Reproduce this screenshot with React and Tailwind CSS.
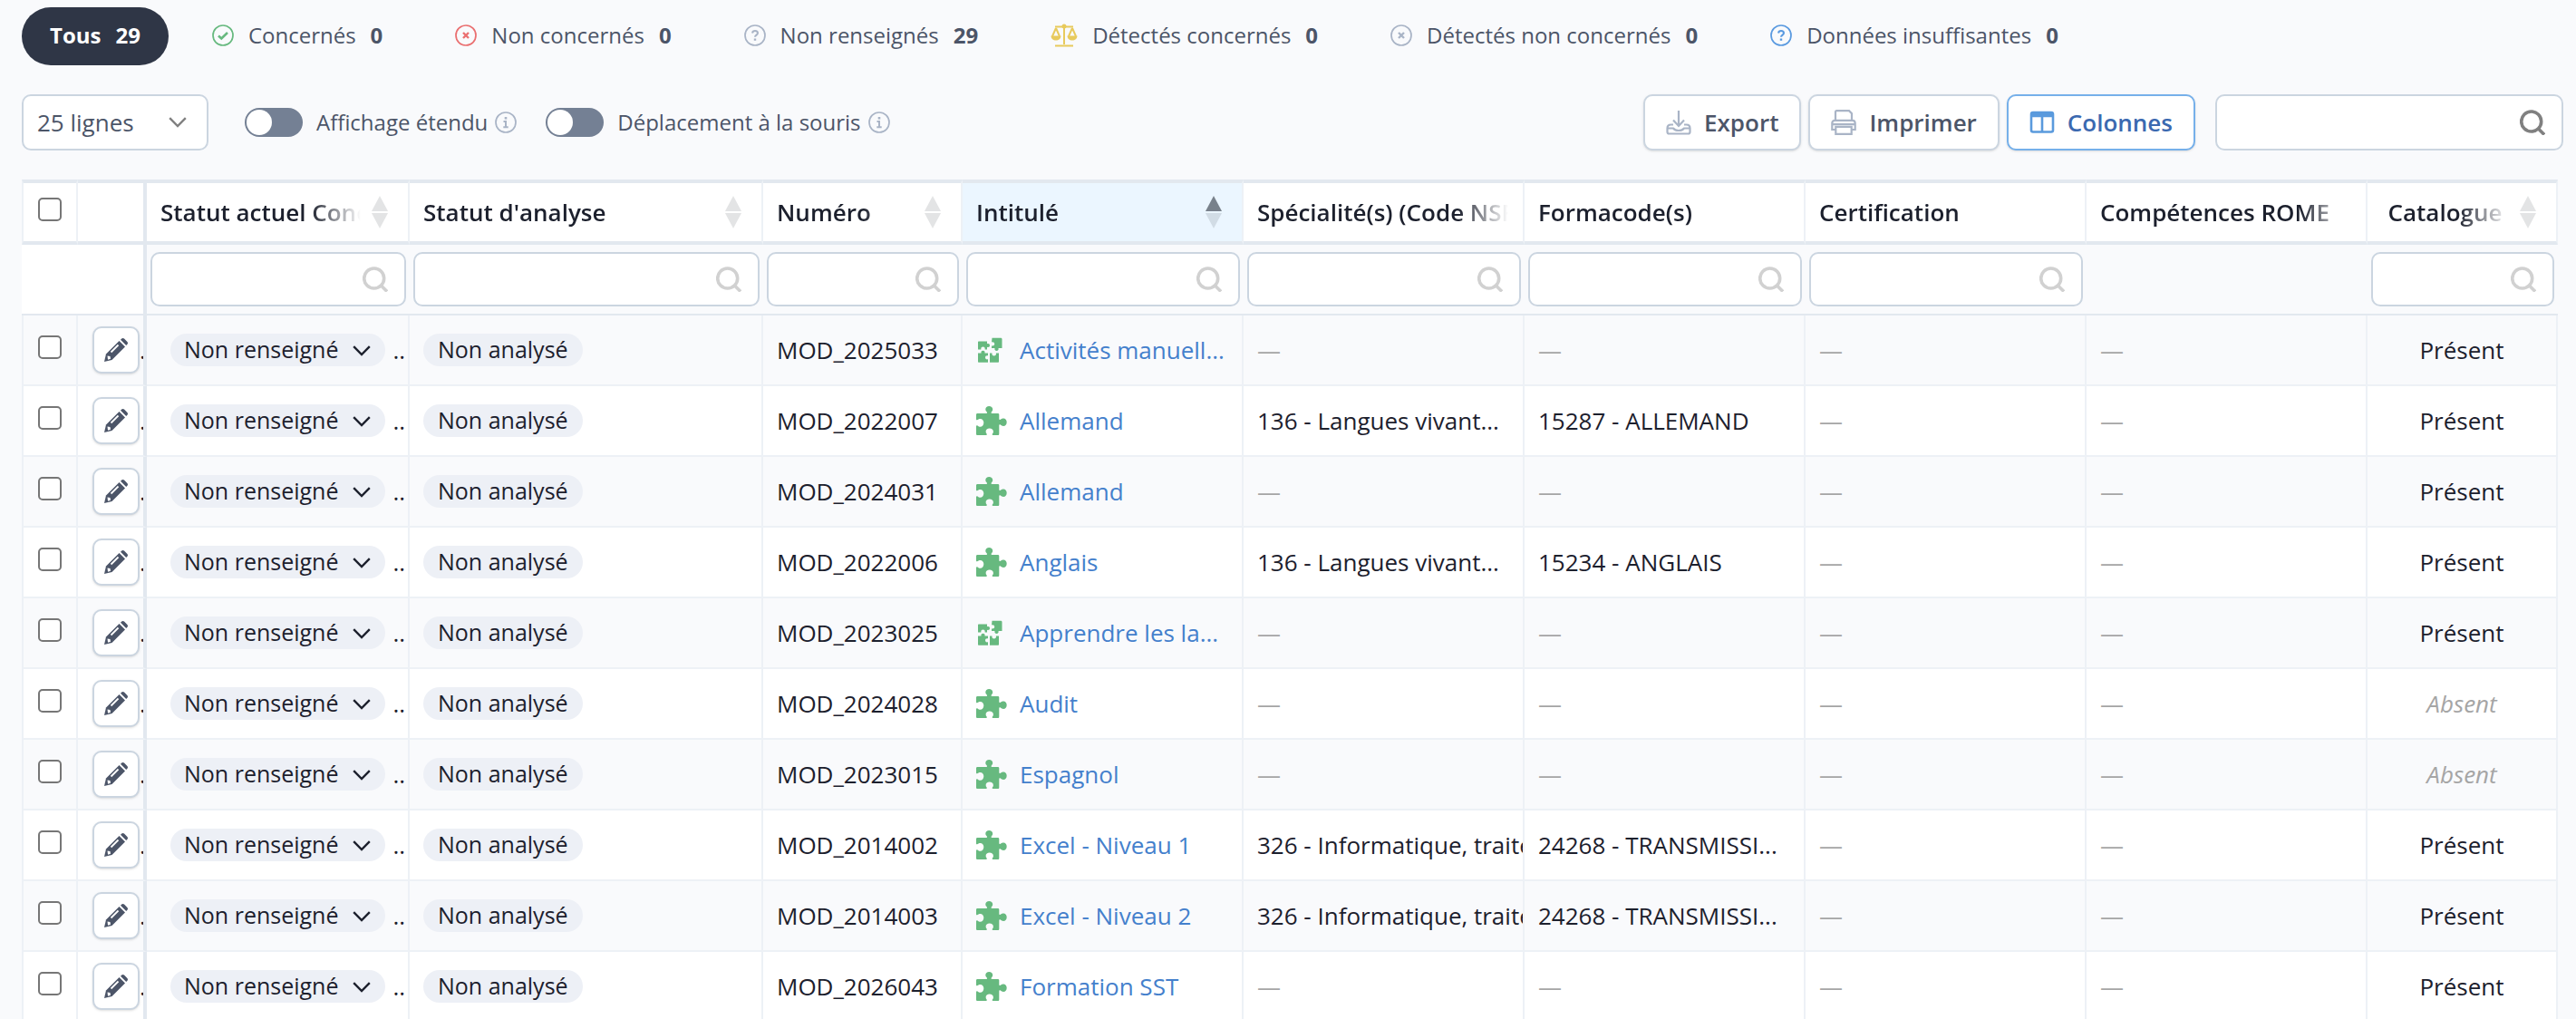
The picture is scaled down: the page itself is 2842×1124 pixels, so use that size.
import React, { useState } from 'react';

const filters = [
  { label: 'Tous', count: 29 },
  { label: 'Concernés', count: 0, icon: 'check', color: 'text-[#67b97f]' },
  { label: 'Non concernés', count: 0, icon: 'cross', color: 'text-[#ea6f70]' },
  { label: 'Non renseignés', count: 29, icon: 'question', color: 'text-[#a9b4c6]' },
  { label: 'Détectés concernés', count: 0, icon: 'scale', color: 'text-[#e8ca5c]' },
  { label: 'Détectés non concernés', count: 0, icon: 'cross', color: 'text-[#a9b4c6]' },
  { label: 'Données insuffisantes', count: 0, icon: 'question', color: 'text-[#5a9ae0]' },
];

const columns = [
  { label: 'Statut actuel Concerné', width: 290, sort: true, search: true },
  { label: "Statut d'analyse", width: 390, sort: true, search: true },
  { label: 'Numéro', width: 220, sort: true, search: true },
  { label: 'Intitulé', width: 310, sort: true, active: true, search: true },
  { label: 'Spécialité(s) (Code NSF)', width: 310, search: true },
  { label: 'Formacode(s)', width: 310, search: true },
  { label: 'Certification', width: 310, search: true },
  { label: 'Compétences ROME', width: 310 },
  { label: 'Catalogue', width: 210, sort: true, center: true, search: true },
];

const rows = [
  { num: 'MOD_2025033', title: 'Activités manuell...', split: true, present: true },
  { num: 'MOD_2022007', title: 'Allemand', nsf: '136 - Langues vivant...', forma: '15287 - ALLEMAND', present: true },
  { num: 'MOD_2024031', title: 'Allemand', present: true },
  { num: 'MOD_2022006', title: 'Anglais', nsf: '136 - Langues vivant...', forma: '15234 - ANGLAIS', present: true },
  { num: 'MOD_2023025', title: 'Apprendre les la...', split: true, present: true },
  { num: 'MOD_2024028', title: 'Audit', present: false },
  { num: 'MOD_2023015', title: 'Espagnol', present: false },
  { num: 'MOD_2014002', title: 'Excel - Niveau 1', nsf: '326 - Informatique, traite', forma: '24268 - TRANSMISSI...', present: true },
  { num: 'MOD_2014003', title: 'Excel - Niveau 2', nsf: '326 - Informatique, traite', forma: '24268 - TRANSMISSI...', present: true },
  { num: 'MOD_2026043', title: 'Formation SST', present: true },
];

const StatusIcon = ({ type }) => {
  if (type === 'scale') {
    return (
      <svg viewBox="0 0 30 26" className="h-[26px] w-[30px]" fill="none" stroke="currentColor" strokeWidth="2">
        <path d="M5 3.5h20M15 3v20M5 24.5h20" />
        <circle cx="15" cy="3" r="2.5" fill="currentColor" stroke="none" />
        <path d="M6 5 2 14M6 5l4 9M24 5l-4 9M24 5l4 9" />
        <path d="M.5 13.5h11c0 3-2.5 5-5.500 5s-5.500-2-5.500-5zM18.500 13.500h11c0 3-2.500 5-5.500 5s-5.500-2-5.500-5z" fill="currentColor" stroke="none" />
      </svg>
    );
  }
  return (
    <svg viewBox="0 0 24 24" className="size-6" fill="none" stroke="currentColor" strokeWidth="2">
      <circle cx="12" cy="12" r="11" strokeWidth="1.7" />
      {type === 'check' && <path d="m7 12.500 3.300 3L17 9" strokeWidth="2.6" />}
      {type === 'cross' && <path d="m9 9 6 6M15 9l-6 6" strokeWidth="2.4" />}
      {type === 'question' && (
        <>
          <path d="M9 9.500c.3-1.700 1.500-2.500 3-2.500 1.700 0 3 1 3 2.500 0 2-3 2.200-3 4.300" />
          <path d="M12 15.500v2.300" strokeWidth="2.4" />
        </>
      )}
      {type === 'info' && (
        <>
          <path d="M12 6v2.600" strokeWidth="2.6" />
          <path d="M9.500 11H12v6M9.300 17.200h5.400" />
        </>
      )}
    </svg>
  );
};

const Search = ({ className }) => (
  <svg viewBox="0 0 28 28" className={`pointer-events-none absolute top-1/2 right-5 size-7 -translate-y-1/2 ${className}`} fill="none" stroke="currentColor" strokeWidth="3.6">
    <circle cx="12.700" cy="13" r="11" />
    <path d="m20 20.500 7 7" />
  </svg>
);

const Chevron = ({ className }) => (
  <svg viewBox="0 0 20 12" className={className} fill="none" stroke="currentColor" strokeWidth="2.4">
    <path d="m1.200 1.200 8.800 8.800 8.800-8.800" />
  </svg>
);

const SortArrows = ({ active }) => (
  <svg viewBox="0 0 18 36" className="mr-[6px] h-9 w-[18px] shrink-0 fill-[#1a202c]">
    <path d="M9 0l9 17H0z" opacity={active ? 0.55 : 0.12} />
    <path d="M9 36l9-17H0z" opacity="0.12" />
  </svg>
);

const Pencil = () => (
  <svg viewBox="0 0 26 26" className="size-[26px] shrink-0">
    <path d="M0 26l2-8.500L16.500 3 23 9.500 8.500 24z" fill="#4c5568" />
    <path d="M18 1.800 19.200.6c.8-.8 2-.8 2.800 0L25.400 4c.8.8.8 2 0 2.800L24.200 8z" fill="#4c5568" />
    <path d="M7.500 15.500l8-8" stroke="#fff" strokeWidth="1.8" />
    <path d="M3.500 19.500l3 .5.5 2.800-3 1z" fill="#fff" />
  </svg>
);

const Puzzle = () => (
  <svg viewBox="0 0 34 32" className="h-8 w-[34px]" fill="currentColor">
    <path d="M0 9.500C0 8.500.5 8 1.500 8h9.800c.8 0 1-.8.5-1.500C11 5.600 10.300 4.800 10.300 3.500 10.300 1.500 12 0 14.200 0s4 1.500 4 3.500c0 1.300-.7 2.100-1.400 3-.5.700-.3 1.500.5 1.500h6.500c1 0 1.500.5 1.500 1.500v4.700c0 .8.8 1 1.500.5.8-.6 1.800-1.300 3.200-1.300 2.200 0 3.700 1.900 3.700 4.300s-1.500 4.200-3.700 4.200c-1.400 0-2.400-.7-3.200-1.300-.7-.5-1.500-.3-1.500.5v9.400c0 1-.5 1.500-1.500 1.500h-5.300c-.8 0-1.100-.8-.6-1.500.6-.8 1-1.500 1-2.600 0-2.100-1.800-3.500-4.200-3.500s-4.100 1.400-4.100 3.500c0 1.100.4 1.800 1 2.600.5.7.2 1.500-.6 1.500H1.500C.5 32 0 31.500 0 30.500v-8.400c0-.9.900-1.200 1.500-.7.9.8 1.800 1.300 3 1.300 2.200 0 3.800-1.900 3.800-4.500S6.700 13.900 4.500 13.900c-1.200 0-2.100.5-3 1.200-.6.5-1.500.2-1.500-.7z" />
  </svg>
);

const SplitPuzzle = () => (
  <svg viewBox="0 0 27 28" className="ml-[2px] h-7 w-[27px]" fill="currentColor">
    <path d="M1 4.500h9v2.700c2-.6 3 .4 3 1.800s-1 2.400-3 1.800v2.700H7.600c.4-2-.6-2.900-2.100-2.900s-2.500.9-2.100 2.900H0v-8c0-.6.4-1 1-1z" />
    <path d="M15.500.8H25c1 0 1.500.5 1.500 1.500V12h-4c.6 1.800-.5 2.900-2 2.900s-2.600-1.100-2-2.900H15V9.500c2.200.4 3.200-.7 3.200-2.200S17 5 15 5.400z" />
    <path d="M0 17.500h3.600c-.6-1.900.4-2.800 1.900-2.800s2.500.9 1.900 2.800H11v2.800c-2-.5-3 .5-3 2s1 2.500 3 2v3.500H1c-.6 0-1-.4-1-1z" />
    <path d="M13 17.500h2.500c-.4 2 .6 3 2.200 3s2.600-1 2.200-3h3.100v9.300c0 .6-.4 1-1 1h-9z" />
  </svg>
);

const ExportIcon = () => (
  <svg viewBox="0 0 28 28" className="size-7" fill="none" stroke="currentColor" strokeWidth="2.2">
    <path d="M14 1v17M8 11.500l6 6.500 6-6.500" />
    <path d="M8 16.500H5.500c-2.500 0-4 1.800-4 4v4c0 1.200.8 2 2 2h21c1.200 0 2-.8 2-2v-4c0-2.200-1.500-4-4-4H20M1.500 20.500H8c1.500 2 3.500 2.500 6 2.500s4.500-.5 6-2.500h6.500" />
  </svg>
);

const PrintIcon = () => (
  <svg viewBox="0 0 28 28" className="size-7" fill="none" stroke="currentColor" strokeWidth="2.2">
    <path d="M5 12V2.500C5 1.700 5.500 1.200 6.300 1.200H20l3 3V12" />
    <path d="M5 22H1.300v-7c0-2 1-3.200 3-3.200h19.400c2 0 3 1.200 3 3.200v7H23M2 16.200h24" />
    <path d="M5.300 18.800h17.400v8H5.300z" />
  </svg>
);

const ColumnsIcon = () => (
  <svg viewBox="0 0 28 28" className="size-7" fill="none" stroke="currentColor" strokeWidth="2.6">
    <rect x="2" y="3" width="24" height="21.500" rx="2" />
    <path d="M14 8v16" />
    <path d="M2 5.500h24" strokeWidth="5.5" />
  </svg>
);

const ToolButton = ({ icon, children, active }) => (
  <button
    type="button"
    className={`flex h-[62px] items-center gap-[14px] rounded-[10px] border-2 bg-white pr-[23px] pl-[23px] font-semibold shadow-sm ${
      active ? 'border-[#76b0ea] text-[#3b69b0]' : 'border-[#cbd5e0] text-[#4c5568]'
    }`}
  >
    <span className={active ? 'text-[#5a9add]' : 'text-[#a9b4c6]'}>{icon}</span>
    {children}
  </button>
);

const Toggle = ({ label }) => (
  <div className="flex items-center gap-2">
    <label className="flex items-center gap-[15px] text-[24px]">
      <input
        type="checkbox"
        className="h-8 w-16 appearance-none rounded-full bg-[#748094] p-[2px] before:block before:size-7 before:rounded-full before:bg-white checked:before:translate-x-8"
      />
      {label}
    </label>
    <span className="text-[#a9b4c6]">
      <StatusIcon type="info" />
    </span>
  </div>
);

const CheckBox = ({ label }) => (
  <input
    type="checkbox"
    aria-label={label}
    className="block size-[26px] appearance-none rounded-[5px] border-2 border-[#767676] bg-white checked:bg-[#3b69b0]"
  />
);

const Dash = () => <span className="text-[#a5a5a5]">—</span>;

const cell = 'overflow-hidden whitespace-nowrap border-r-2 border-b-2 border-[#edf1f6] pl-[15px]';

const Row = ({ row, odd }) => (
  <tr className={`h-[78px] ${odd ? 'bg-[#f9fafc]' : 'bg-white'}`}>
    <td className="border-x-2 border-b-2 border-[#edf1f6] pb-[6px] pl-4">
      <CheckBox label={`Sélectionner ${row.num}`} />
    </td>
    <td className="overflow-hidden border-r-4 border-b-2 border-r-[#e2e8ef] border-b-[#edf1f6] pl-4">
      <div className="flex items-center">
        <button
          type="button"
          aria-label={`Modifier ${row.title}`}
          className="flex size-[52px] shrink-0 items-center justify-center rounded-[10px] border-2 border-[#cbd5e0] bg-white shadow"
        >
          <Pencil />
        </button>
        <span className="w-1 overflow-hidden">.</span>
      </div>
    </td>
    <td className={cell}>
      <div className="flex items-center gap-2 pl-[11px]">
        <button type="button" className="flex h-9 shrink-0 items-center gap-4 rounded-full bg-[#edf0f6] pr-4 pb-[2px] pl-[15px] text-[25px]">
          Non renseigné
          <Chevron className="mt-1 h-3 w-5" />
        </button>
        <span className="w-[14px] overflow-hidden">...</span>
      </div>
    </td>
    <td className={cell}>
      <div className="flex">
        <span className="flex h-9 items-center rounded-full bg-[#edf0f6] px-4 pb-[2px] text-[25px]">Non analysé</span>
      </div>
    </td>
    <td className={cell}>{row.num}</td>
    <td className={cell}>
      <div className="flex items-center">
        <span className="w-12 shrink-0 text-[#67b97f]">{row.split ? <SplitPuzzle /> : <Puzzle />}</span>
        <a href="#" className="text-[#4480cc]">{row.title}</a>
      </div>
    </td>
    <td className={cell}>{row.nsf || <Dash />}</td>
    <td className={cell}>{row.forma || <Dash />}</td>
    <td className={cell}><Dash /></td>
    <td className={cell}><Dash /></td>
    <td className="border-r-2 border-b-2 border-[#edf1f6] text-center">
      {row.present ? 'Présent' : <em className="text-[#a5a5a5]">Absent</em>}
    </td>
  </tr>
);

export default function App() {
  const [selected, setSelected] = useState('Tous');

  return (
    <div className="h-screen overflow-hidden bg-[#f9fafc] pt-2 font-['Open_Sans',sans-serif] text-[26px] leading-9 text-[#4c5568]">
      <nav className="flex gap-4 pl-6 text-[24px]">
        {filters.map((f) => (
          <button
            key={f.label}
            type="button"
            onClick={() => setSelected(f.label)}
            className={`flex h-16 items-center gap-4 rounded-full pb-[2px] ${
              selected === f.label ? 'bg-[#2f3646] px-[31px] font-bold text-white' : 'px-8'
            }`}
          >
            {f.icon && (
              <span className={f.color}>
                <StatusIcon type={f.icon} />
              </span>
            )}
            <span>{f.label}</span>
            <span className="font-bold">{f.count}</span>
          </button>
        ))}
      </nav>

      <div className="mt-8 flex items-center justify-between pr-[14px] pl-6">
        <div className="flex items-center">
          <div className="relative mr-10">
            <select
              aria-label="Nombre de lignes"
              className="block h-[62px] w-[206px] appearance-none rounded-[10px] border-2 border-[#cbd5e0] bg-white px-[15px]"
            >
              <option>25 lignes</option>
              <option>50 lignes</option>
            </select>
            <Chevron className="pointer-events-none absolute top-1/2 right-6 h-3 w-5 -translate-y-1/2 text-[#808080]" />
          </div>
          <div className="flex gap-8">
            <Toggle label="Affichage étendu" />
            <Toggle label="Déplacement à la souris" />
          </div>
        </div>
        <div className="flex items-center gap-2">
          <ToolButton icon={<ExportIcon />}>Export</ToolButton>
          <ToolButton icon={<PrintIcon />}>Imprimer</ToolButton>
          <ToolButton icon={<ColumnsIcon />} active>Colonnes</ToolButton>
          <div className="relative ml-[14px]">
            <input
              type="text"
              aria-label="Rechercher"
              className="block h-[62px] w-[384px] rounded-[10px] border-2 border-[#cbd5e0] bg-white pr-14 pl-4"
            />
            <Search className="text-[#808080]" />
          </div>
        </div>
      </div>

      <div className="mt-8 pr-5 pl-6">
        <table className="w-full table-fixed border-separate border-spacing-0 text-[#1c202d]">
          <colgroup>
            <col style={{ width: 62 }} />
            <col style={{ width: 76 }} />
            {columns.map((c) => (
              <col key={c.label} style={{ width: c.width }} />
            ))}
          </colgroup>
          <thead>
            <tr className="h-[72px] bg-white">
              <th className="border-x-2 border-y-4 border-x-[#edf1f6] border-y-[#e2e8ef] pb-[6px] pl-4">
                <CheckBox label="Tout sélectionner" />
              </th>
              <th className="border-y-4 border-r-4 border-[#e2e8ef]" />
              {columns.map((c) => (
                <th
                  key={c.label}
                  className={`border-y-4 border-r-2 border-x-[#edf1f6] border-y-[#e2e8ef] pr-4 pl-[15px] font-semibold ${
                    c.active ? 'bg-[#ebf6ff]' : ''
                  }`}
                >
                  <div className="flex items-center gap-3">
                    <span
                      className={`grow overflow-hidden whitespace-nowrap [mask-image:linear-gradient(to_left,transparent,black_56px)] ${
                        c.center ? 'text-center' : 'text-left'
                      }`}
                    >
                      {c.label}
                    </span>
                    {c.sort && <SortArrows active={c.active} />}
                  </div>
                </th>
              ))}
            </tr>
            <tr className="h-[78px]">
              <td className="border-b-2 border-[#e2e8ef] bg-white" />
              <td className="border-r-4 border-b-2 border-[#e2e8ef] bg-white" />
              {columns.map((c) => (
                <td key={c.label} className="border-b-2 border-[#e2e8ef] px-1">
                  {c.search && (
                    <div className="relative">
                      <input
                        type="text"
                        aria-label={`Filtrer ${c.label}`}
                        className="block h-[60px] w-full rounded-[10px] border-2 border-[#cbd5e0] bg-white pr-14 pl-4"
                      />
                      <Search className="text-[#d1d1d1]" />
                    </div>
                  )}
                </td>
              ))}
            </tr>
          </thead>
          <tbody>
            {rows.map((row, i) => (
              <Row key={row.num} row={row} odd={i % 2 === 0} />
            ))}
          </tbody>
        </table>
      </div>
    </div>
  );
}
